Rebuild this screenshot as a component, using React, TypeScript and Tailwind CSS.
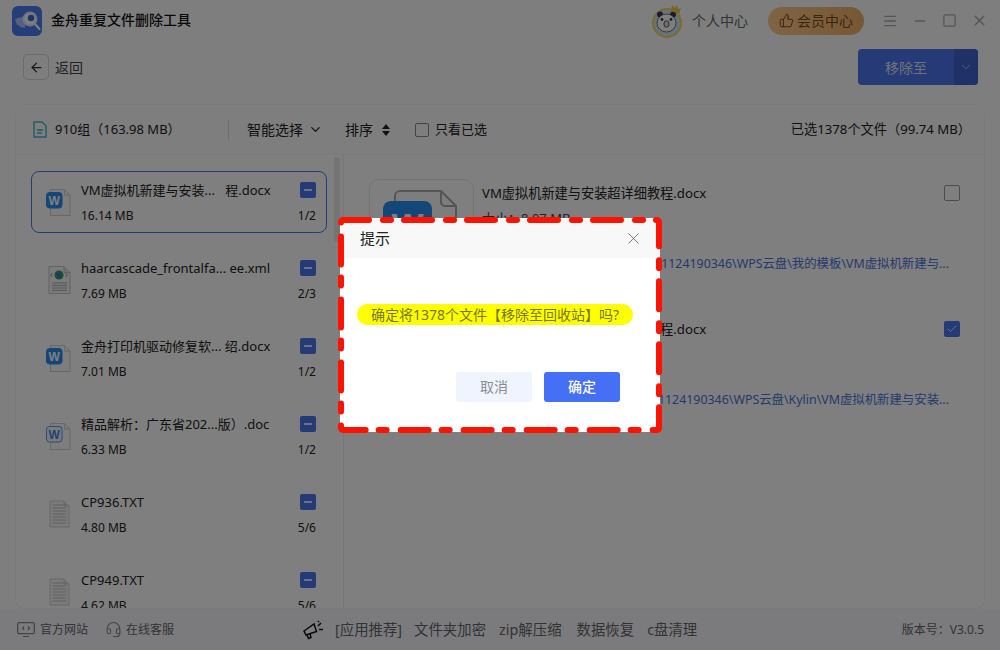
import { ArrowLeft, Check, ChevronDown, Headset, Menu, Minus, Square, ThumbsUp, X } from "lucide-react";

const font = "font-['Noto_Sans','Noto_Sans_CJK_SC',sans-serif]";

const groups = [
  { name: "VM虚拟机新建与安装...\u00a0\u00a0\u00a0程.docx", size: "16.14 MB", count: "1/2", icon: "word" },
  { name: "haarcascade_frontalfa... ee.xml", size: "7.69 MB", count: "2/3", icon: "xml" },
  { name: "金舟打印机驱动修复软... 绍.docx", size: "7.01 MB", count: "1/2", icon: "word" },
  { name: "精品解析：广东省202...版）.doc", size: "6.33 MB", count: "1/2", icon: "doc" },
  { name: "CP936.TXT", size: "4.80 MB", count: "5/6", icon: "txt" },
  { name: "CP949.TXT", size: "4.62 MB", count: "5/6", icon: "txt" },
];

function FileIcon({ type }: { type: string }) {
  if (type === "xml") {
    return (
      <svg width="26" height="30" viewBox="0 0 26 30" fill="none">
        <path d="M3 1.5h15l6 6v21H3z" fill="#f6f6f6" stroke="#c4c4c4" />
        <path d="M18 1.5v6h6" fill="#e4e4e4" stroke="#c4c4c4" />
        {[18, 20.5, 23, 25.5].map((y) => (
          <path key={y} d={`M6 ${y}h15`} stroke="#b8b8b8" strokeWidth="1.2" />
        ))}
        <circle cx="13" cy="10" r="4.5" fill="#2f9e5f" />
        <path d="M10 8h4l1 3-3 2.5z" fill="#2f78d8" />
        <path d="M6.5 8 4.5 10l2 2M19.5 8l2 2-2 2" stroke="#999" />
      </svg>
    );
  }
  if (type === "txt") {
    return (
      <svg width="26" height="28" viewBox="0 0 26 28" fill="none">
        <path d="M4 1h14l5 5v21H4z" fill="#f6f6f6" stroke="#d0d0d0" />
        <path d="M18 1v5h5" fill="#e8e8e8" stroke="#d0d0d0" />
        {[5, 8, 11, 14, 17, 20, 23].map((y) => (
          <path key={y} d={`M6.5 ${y}h14`} stroke="#c4c4c4" strokeWidth="1.1" />
        ))}
      </svg>
    );
  }
  return (
    <svg width="26" height="27" viewBox="0 0 26 27" fill="none">
      <path d="M4.5 0.5h14l5.5 5.5v20.5H4.5z" fill="#fafafa" stroke="#d0d0d0" />
      <path d="M18.5 0.5V6H24" stroke="#d0d0d0" />
      <rect
        x="0.5"
        y="3.5"
        width="15.5"
        height="15.5"
        rx="3"
        fill={type === "doc" ? "#f2f6ff" : "#2b8df0"}
        stroke={type === "doc" ? "#5d93ea" : "#2b8df0"}
      />
      <text x="8.2" y="15.5" textAnchor="middle" fontSize="12" fontWeight="700" fill={type === "doc" ? "#4a86e8" : "#fff"} fontFamily="Liberation Sans, sans-serif">
        W
      </text>
    </svg>
  );
}

function GroupRow({ group, active }: { group: (typeof groups)[number]; active: boolean }) {
  return (
    <div className={`flex h-[62px] shrink-0 items-center rounded-[8px] border pl-[14px] pr-[10px] ${active ? "border-[#4a7bea]" : "border-transparent"}`}>
      <div className="flex w-[35px] shrink-0 justify-start">
        <FileIcon type={group.icon} />
      </div>
      <div className="min-w-0 flex-1 pt-[2px]">
        <div className="flex items-center justify-between">
          <span className="whitespace-nowrap text-[13px] leading-[18px] text-[#222]">{group.name}</span>
          <span className="flex h-4 w-4 items-center justify-center rounded-[2px] bg-[#4a74ee]">
            <span className="h-[2px] w-2 bg-[#d8e2ff]" />
          </span>
        </div>
        <div className="mt-[8px] flex items-center justify-between text-[12px] leading-[18px] text-[#222]">
          <span>{group.size}</span>
          <span>{group.count}</span>
        </div>
      </div>
    </div>
  );
}

function DetailRow({ path, checked }: { path: string; checked: boolean }) {
  return (
    <div className="flex h-[136px] shrink-0 pl-[25px] pr-[24px]">
      <div className="flex h-[104px] w-[105px] shrink-0 items-start justify-center rounded-[10px] border border-[#e6e6e6] pr-[4px] pt-[10px]">
        <svg width="74" height="72" viewBox="0 0 74 72" fill="none">
          <path d="M17 1h41l15 15v50a5 5 0 0 1-5 5H17a5 5 0 0 1-5-5V6a5 5 0 0 1 5-5z" fill="#fafafa" stroke="#aaa" strokeWidth="2" />
          <path d="M58 1v11a4 4 0 0 0 4 4h11" stroke="#aaa" strokeWidth="2" />
          <rect x="0" y="11" width="49" height="49" rx="8" fill="#2b8df0" />
          <text x="24.5" y="47" textAnchor="middle" fontSize="34" fontWeight="700" fill="#fff" fontFamily="Liberation Sans, sans-serif">
            W
          </text>
        </svg>
      </div>
      <div className="min-w-0 flex-1 pl-[8px]">
        <div className="flex items-start justify-between pt-[4px]">
          <span className="text-[13.2px] leading-[20px] text-[#222]">VM虚拟机新建与安装超详细教程.docx</span>
          {checked ? (
            <span className="mt-[2px] flex h-4 w-4 items-center justify-center rounded-[2px] bg-[#4a74ee]">
              <Check size={12} strokeWidth={2} className="text-[#d8e2ff]" />
            </span>
          ) : (
            <span className="mt-[2px] h-4 w-4 rounded-[2px] border border-[#999]" />
          )}
        </div>
        <div className="mt-[5px] text-[13px] leading-[20px] text-[#444]">大小：8.07 MB</div>
        <div className="mt-[27px] flex w-[467px] justify-end overflow-hidden whitespace-nowrap text-[12.4px] leading-[18px] text-[#4a74d8]">
          {path}
        </div>
      </div>
    </div>
  );
}

function Logo() {
  return (
    <svg width="30" height="30" viewBox="0 0 30 30" fill="none">
      <rect width="30" height="30" rx="6" fill="#4a7bf0" />
      <path d="M3 13l10-3v11l-8-2zM5 17l8-1v6l-5-1z" fill="#a9c4ff" />
      <circle cx="18" cy="13" r="6.5" fill="#fff" stroke="#dfe9ff" strokeWidth="2" />
      <circle cx="19" cy="12" r="3.2" fill="#3c66d8" />
      <path d="M23 18l4.5 5" stroke="#fff" strokeWidth="2" strokeLinecap="round" />
    </svg>
  );
}

function Avatar() {
  return (
    <svg width="32" height="36" viewBox="0 0 32 36" fill="none">
      <circle cx="15" cy="20" r="14" fill="#cfe6f7" stroke="#f3d55c" strokeWidth="2" />
      <circle cx="8" cy="11.5" r="3" fill="#3a3360" />
      <circle cx="21" cy="11.5" r="3" fill="#3a3360" />
      <ellipse cx="14.5" cy="20" rx="9.5" ry="9" fill="#fff" stroke="#555" strokeWidth="0.8" />
      <circle cx="10" cy="16.5" r="1.4" fill="#3a3360" />
      <circle cx="19" cy="16.5" r="1.4" fill="#3a3360" />
      <ellipse cx="14.5" cy="21" rx="2.6" ry="3.2" fill="#ddd" stroke="#555" />
      <path d="M19 8l1-6 3 3 2-3 1 4 3-1-2 6z" fill="#f3c94a" />
    </svg>
  );
}

export default function App() {
  return (
    <div className={`relative flex h-[650px] w-[1000px] flex-col overflow-hidden bg-[#fcfcff] ${font}`}>
      {/* 标题栏 */}
      <div className="flex h-[41px] shrink-0 items-center pl-[12px] pr-[12px]">
        <Logo />
        <span className="ml-[9px] -mt-[2px] text-[14px] font-medium text-[#111]">金舟重复文件删除工具</span>
        <div className="ml-auto flex items-center">
          <Avatar />
          <span className="ml-[8px] text-[14px] text-[#666]">个人中心</span>
          <div className="ml-[20px] flex h-[28px] w-[96px] items-center justify-center gap-[3px] rounded-full bg-gradient-to-r from-[#fec98a] to-[#eeb068] text-[14px] text-[#7a4a14]">
            <ThumbsUp size={15} strokeWidth={1.6} />
            会员中心
          </div>
          <Menu size={16} strokeWidth={2} className="ml-[18px] text-[#aaa]" />
          <Minus size={16} strokeWidth={2} className="ml-[14px] text-[#aaa]" />
          <Square size={15} strokeWidth={2} className="ml-[14px] text-[#aaa]" />
          <X size={17} strokeWidth={2} className="ml-[14px] text-[#aaa]" />
        </div>
      </div>

      {/* 返回 */}
      <div className="flex h-[63px] shrink-0 items-start pl-[23px] pr-[22px] pt-[8px]">
        <div className="mt-[5px] flex h-[26px] w-[26px] items-center justify-center rounded-[5px] border border-[#d8d8d8]">
          <ArrowLeft size={15} strokeWidth={2} className="text-[#333]" />
        </div>
        <span className="ml-[6px] mt-[9px] text-[14px] leading-[20px] text-[#444]">返回</span>
        <div className="ml-auto flex h-[36px] w-[120px] overflow-hidden rounded-[4px] bg-[#4a74ee] text-[#bfc9e8]">
          <span className="flex flex-1 items-center justify-center text-[14px] text-[#dfe4f2]">移除至</span>
          <span className="flex w-[24px] items-center justify-center bg-[#3f62cf]">
            <ChevronDown size={14} strokeWidth={1.5} />
          </span>
        </div>
      </div>

      {/* 主面板 */}
      <div className="mx-[15px] flex min-h-0 flex-1 flex-col rounded-t-[12px] rounded-b-[10px] border border-[#f2f2f4] bg-[#ffffff]">
        <div className="flex h-[50px] shrink-0 items-center border-b border-[#f4f4f6] bg-[#fdfdff] pl-[17px] pr-[13px] text-[#222]">
          <svg width="14" height="17" viewBox="0 0 14 17" fill="none">
            <path d="M1 1h8l4 4v11H1z" stroke="#42b8c8" strokeWidth="1.4" />
            <path d="M4 9h6M4 12h5" stroke="#42b8c8" strokeWidth="1.4" />
          </svg>
          <span className="ml-[8px] w-[173px] shrink-0 text-[13px]">910组（163.98 MB）</span>
          <span className="h-5 w-px bg-[#ddd]" />
          <span className="ml-[18px] text-[14px]">智能选择</span>
          <ChevronDown size={15} strokeWidth={2} className="ml-[5px]" />
          <span className="ml-[22px] text-[14px]">排序</span>
          <svg width="8" height="12" viewBox="0 0 8 12" className="ml-[9px]">
            <path d="M4 0l4 5H0zM4 12l4-5H0z" fill="#222" />
          </svg>
          <span className="ml-[25px] h-[14px] w-[14px] rounded-[2px] border border-[#888]" />
          <span className="ml-[6px] text-[13px]">只看已选</span>
          <span className="ml-auto text-[13.2px]">已选1378个文件（99.74 MB）</span>
        </div>
        <div className="flex min-h-0 flex-1 overflow-hidden">
          <div className="relative flex w-[328px] shrink-0 flex-col gap-[16px] overflow-hidden border-r border-[#eeeef0] pl-[15px] pr-[16px] pt-[16px]">
            {groups.map((g, i) => (
              <GroupRow key={g.name} group={g} active={i === 0} />
            ))}
            <div className="absolute right-[3px] top-[2px] h-[85px] w-[6px] rounded-full bg-[#e8e8ea]" />
          </div>
          <div className="flex min-w-0 flex-1 flex-col pt-[24px]">
            <DetailRow path="路径：C:\Users\Documents\1124190346\WPS云盘\我的模板\VM虚拟机新建与..." checked={false} />
            <DetailRow path="路径：C:\Users\Documents\1124190346\WPS云盘\Kylin\VM虚拟机新建与安装..." checked={true} />
          </div>
        </div>
      </div>

      {/* 底栏 */}
      <div className="flex h-[41px] shrink-0 items-center bg-[#f6f7fd] pl-[17px] pr-[16px] text-[#666]">
        <svg width="18" height="16" viewBox="0 0 18 16" fill="none" className="shrink-0">
          <rect x="0.7" y="0.7" width="16.6" height="11" rx="1.5" stroke="#888" strokeWidth="1.3" />
          <path d="M7 4.5 5.5 6.2 7 8M11 4.5l1.5 1.7L11 8M6 14.5h6" stroke="#888" strokeWidth="1.2" />
        </svg>
        <span className="ml-[5px] text-[12px]">官方网站</span>
        <Headset size={17} strokeWidth={1.5} className="ml-[17px] text-[#888]" />
        <span className="ml-[4px] text-[12px]">在线客服</span>
        <svg width="21" height="20" viewBox="0 0 21 20" fill="none" className="ml-[129px] shrink-0">
          <path d="M1 11l10-7 2.5 7.5L3 15z" fill="#fff" stroke="#111" strokeWidth="1.5" />
          <path d="M4 15l1.5 3.5L8 17.5 7 14M15 6l3-3M16 9.5h4M15 2l1-1" stroke="#111" strokeWidth="1.5" />
        </svg>
        <span className="ml-[11px] text-[14.4px]">[应用推荐]</span>
        <span className="ml-[12px] text-[14.4px]">文件夹加密</span>
        <span className="ml-[13px] text-[14.4px]">zip解压缩</span>
        <span className="ml-[15px] text-[14.4px]">数据恢复</span>
        <span className="ml-[13px] text-[14.4px]">c盘清理</span>
        <span className="ml-auto text-[12px]">版本号：V3.0.5</span>
      </div>

      {/* 遮罩 */}
      <div className="absolute inset-0 bg-black/50" />

      {/* 提示框 */}
      <div className="absolute left-[340px] top-[218px] flex h-[214px] w-[320px] flex-col bg-white">
        <div className="flex h-[40px] shrink-0 items-center justify-between bg-[#f8f8f8] pl-[20px] pr-[17px]">
          <span className="text-[15px] text-[#222]">提示</span>
          <X size={19} strokeWidth={1.2} className="text-[#777]" />
        </div>
        <div className="flex justify-center pr-[10px] pt-[46px]">
          <span className="flex h-[21px] w-[276px] items-center justify-center rounded-full bg-[#ffff00] text-[14px] text-[#77771a]">
            确定将1378个文件【移除至回收站】吗?
          </span>
        </div>
        <div className="mt-[47px] flex justify-end gap-[12px] pr-[40px]">
          <span className="flex h-[30px] w-[76px] items-center justify-center rounded-[3px] bg-[#f0f4ff] pb-[1px] text-[14px] text-[#8a8d96]">取消</span>
          <span className="flex h-[30px] w-[76px] items-center justify-center rounded-[3px] bg-[#4570f5] pb-[1px] text-[14px] font-medium text-white">确定</span>
        </div>
      </div>

      {/* 红色虚线标注 */}
      <svg width="334" height="226" viewBox="0 0 334 226" fill="none" className="absolute left-[333px] top-[212px]">
        <rect x="8" y="8" width="318" height="210" rx="2" stroke="#ff1200" strokeWidth="6" strokeLinecap="round" strokeDasharray="28 14 8 13" strokeDashoffset="2" />
      </svg>
    </div>
  );
}
